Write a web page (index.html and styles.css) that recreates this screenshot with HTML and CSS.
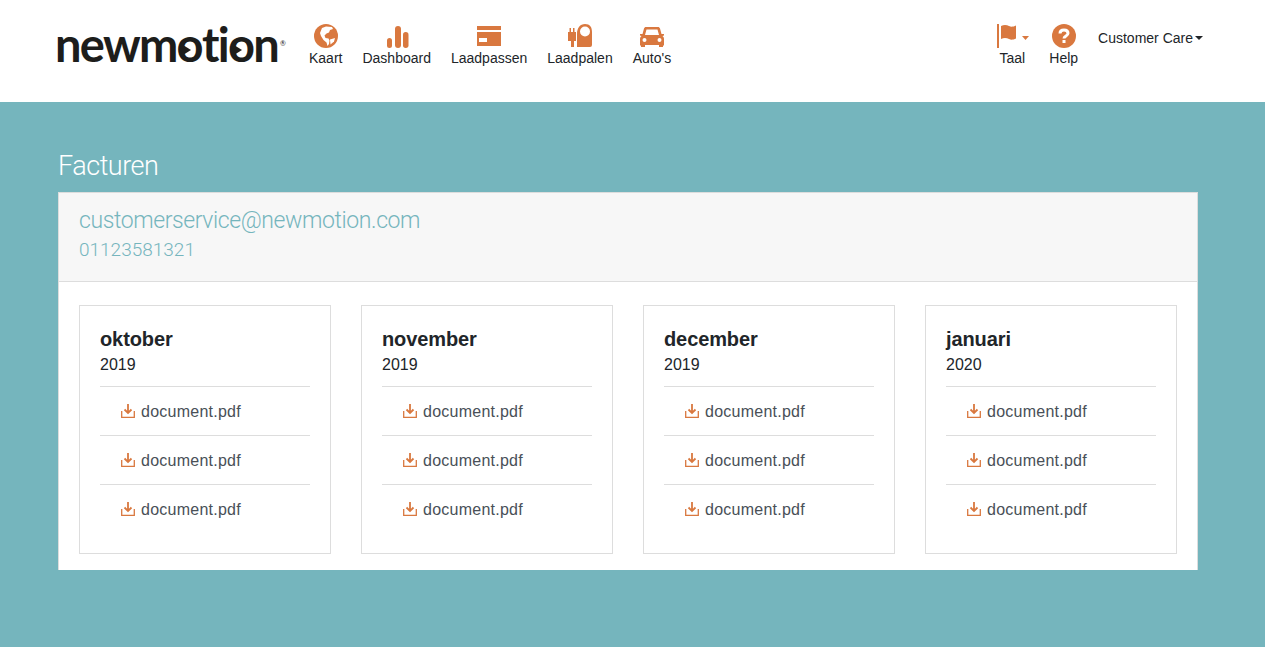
FILE: index.html
```html
<!DOCTYPE html>
<html>
<head>
  <meta charset="UTF-8" />
  <title>Facturen</title>
  <link rel="stylesheet" href="styles.css">
</head>
<body>
  <header class="topbar">
    <a class="logo">newm<span class="logo-o">o</span>ti<span class="logo-o">o</span>n<sup class="logo-reg">®</sup></a>
    <nav class="nav">
      <a class="nav-item">
        <svg class="nav-icon" viewBox="0 0 24 24"><circle cx="12" cy="12" r="12" fill="#d9783f"/><path fill="#fff" d="M8 4l4-1.500 6 .5 1 2-3 1-1 2.500-2.500 1-2 2 1 2.500 3 .5 1 2-.5 3.500-1.500 2-1-3.500-3-2.500-2.500-4-1-3z"/><path fill="#fff" d="M16 15.500l5-1.500-1 3.500-3.500 3z"/></svg>
        <span>Kaart</span>
      </a>
      <a class="nav-item">
        <svg class="nav-icon" viewBox="0 0 24 24"><rect x="2" y="14" width="5" height="10" rx="2.500" fill="#d9783f"/><rect x="10" y="2" width="6" height="22" rx="3" fill="#d9783f"/><rect x="18" y="8" width="5.500" height="16" rx="2.700" fill="#d9783f"/></svg>
        <span>Dashboard</span>
      </a>
      <a class="nav-item">
        <svg class="nav-icon" viewBox="0 0 24 24"><path fill="#d9783f" d="M0 2h24v4H0zM0 8h24v14H0z"/><rect x="2" y="14" width="8" height="4" fill="#fff"/></svg>
        <span>Laadpassen</span>
      </a>
      <a class="nav-item">
        <svg class="nav-icon" viewBox="0 0 24 24"><path fill="#d9783f" fill-rule="evenodd" d="M9 23V10C9 4 12 0 17 0s7 3 7 8v13a2 2 0 0 1-2 2zM17 2.500a5 5 0 1 0 0 10 5 5 0 0 0 0-10z"/><path fill="#d9783f" d="M1.500 4H3v4h2V4h1.500v4H8v9H6v6H3v-6H0V8h1.500z"/></svg>
        <span>Laadpalen</span>
      </a>
      <a class="nav-item">
        <svg class="nav-icon" viewBox="0 0 24 24"><path fill="#d9783f" fill-rule="evenodd" d="M6 3h12c1 0 1.700.6 2 1.500L21.500 10H24v1.500l-1.500.5c1 .8 1.500 1.800 1.500 3v6l-1 1v1h-4v-2H5v2H1v-1l-1-1v-6c0-1.200.5-2.200 1.500-3L0 11.500V10h2.500L4 4.500C4.300 3.600 5 3 6 3zm.5 2.500L5 11h14l-1.500-5.500zM4.500 14a2 2 0 1 0 0 4 2 2 0 0 0 0-4zm15 0a2 2 0 1 0 0 4 2 2 0 0 0 0-4z"/></svg>
        <span>Auto's</span>
      </a>
    </nav>
    <nav class="nav nav-right">
      <a class="nav-item nav-taal">
        <svg class="nav-icon flag-icon" viewBox="0 0 32 24"><rect x="0" y="0" width="2" height="24" fill="#d9783f"/><path fill="#d9783f" d="M4 2c3-1.500 6-1 8 0s4 1 7-.5v13c-3 1.500-5 1.500-7 .5s-5-1.500-8 0z"/><path fill="#d9783f" d="M25 12h7l-3.500 4z"/></svg>
        <span>Taal</span>
      </a>
      <a class="nav-item">
        <svg class="nav-icon" viewBox="0 0 24 24"><circle cx="12" cy="12" r="12" fill="#d9783f"/><path fill="none" stroke="#fff" stroke-width="3" d="M8 9.500C8 7 10 6 12 6s4 1 4 3.200c0 2.800-4 2.600-4 5.300"/><rect x="10.500" y="16" width="3" height="3" fill="#fff"/></svg>
        <span>Help</span>
      </a>
      <a class="nav-user">Customer Care<span class="caret"></span></a>
    </nav>
  </header>

  <main class="content">
    <h1 class="page-title">Facturen</h1>
    <section class="panel">
      <div class="panel-heading">
        <div class="panel-email">customerservice@newmotion.com</div>
        <div class="panel-phone">01123581321</div>
      </div>
      <div class="panel-body">
        <div class="card">
          <h2 class="card-month">oktober</h2>
          <div class="card-year">2019</div>
          <a class="doc"><svg class="doc-icon" viewBox="0 0 14 14"><path d="M.7 7v6.300h12.600V7"/><path class="doc-arrow" d="M7 0v9M3.500 5.500L7 9l3.500-3.500"/></svg>document.pdf</a>
          <a class="doc"><svg class="doc-icon" viewBox="0 0 14 14"><path d="M.7 7v6.300h12.600V7"/><path class="doc-arrow" d="M7 0v9M3.500 5.500L7 9l3.500-3.500"/></svg>document.pdf</a>
          <a class="doc"><svg class="doc-icon" viewBox="0 0 14 14"><path d="M.7 7v6.300h12.600V7"/><path class="doc-arrow" d="M7 0v9M3.500 5.500L7 9l3.500-3.500"/></svg>document.pdf</a>
        </div>
        <div class="card">
          <h2 class="card-month">november</h2>
          <div class="card-year">2019</div>
          <a class="doc"><svg class="doc-icon" viewBox="0 0 14 14"><path d="M.7 7v6.300h12.600V7"/><path class="doc-arrow" d="M7 0v9M3.500 5.500L7 9l3.500-3.500"/></svg>document.pdf</a>
          <a class="doc"><svg class="doc-icon" viewBox="0 0 14 14"><path d="M.7 7v6.300h12.600V7"/><path class="doc-arrow" d="M7 0v9M3.500 5.500L7 9l3.500-3.500"/></svg>document.pdf</a>
          <a class="doc"><svg class="doc-icon" viewBox="0 0 14 14"><path d="M.7 7v6.300h12.600V7"/><path class="doc-arrow" d="M7 0v9M3.500 5.500L7 9l3.500-3.500"/></svg>document.pdf</a>
        </div>
        <div class="card">
          <h2 class="card-month">december</h2>
          <div class="card-year">2019</div>
          <a class="doc"><svg class="doc-icon" viewBox="0 0 14 14"><path d="M.7 7v6.300h12.600V7"/><path class="doc-arrow" d="M7 0v9M3.500 5.500L7 9l3.500-3.500"/></svg>document.pdf</a>
          <a class="doc"><svg class="doc-icon" viewBox="0 0 14 14"><path d="M.7 7v6.300h12.600V7"/><path class="doc-arrow" d="M7 0v9M3.500 5.500L7 9l3.500-3.500"/></svg>document.pdf</a>
          <a class="doc"><svg class="doc-icon" viewBox="0 0 14 14"><path d="M.7 7v6.300h12.600V7"/><path class="doc-arrow" d="M7 0v9M3.500 5.500L7 9l3.500-3.500"/></svg>document.pdf</a>
        </div>
        <div class="card">
          <h2 class="card-month">januari</h2>
          <div class="card-year">2020</div>
          <a class="doc"><svg class="doc-icon" viewBox="0 0 14 14"><path d="M.7 7v6.300h12.600V7"/><path class="doc-arrow" d="M7 0v9M3.500 5.500L7 9l3.500-3.500"/></svg>document.pdf</a>
          <a class="doc"><svg class="doc-icon" viewBox="0 0 14 14"><path d="M.7 7v6.300h12.600V7"/><path class="doc-arrow" d="M7 0v9M3.500 5.500L7 9l3.500-3.500"/></svg>document.pdf</a>
          <a class="doc"><svg class="doc-icon" viewBox="0 0 14 14"><path d="M.7 7v6.300h12.600V7"/><path class="doc-arrow" d="M7 0v9M3.500 5.500L7 9l3.500-3.500"/></svg>document.pdf</a>
        </div>
      </div>
    </section>
  </main>
</body>
</html>
```
FILE: styles.css
```css
* {
  box-sizing: border-box;
}
html, body {
  height: 100%;
}
body {
  margin: 0;
  background: #75b5bd;
  font-family: "Liberation Sans", Arial, sans-serif;
  color: #212529;
  overflow: hidden;
}
.topbar {
  display: flex;
  height: 102px;
  padding: 24px 62px 0 55px;
  background: #fff;
}
.logo {
  width: 244px;
  height: 50px;
  flex: none;
  font-family: Lato, sans-serif;
  font-weight: 700;
  font-size: 47px;
  line-height: 40px;
  letter-spacing: -1.7px;
  white-space: nowrap;
  color: #1d1d1b;
}
.logo-o {
  position: relative;
  display: inline-block;
}
.logo-o::after {
  content: "";
  position: absolute;
  left: 6px;
  top: 21px;
  border-left: 8px solid #1d1d1b;
  border-top: 5px solid transparent;
  border-bottom: 5px solid transparent;
}
.logo-reg {
  font-size: 7px;
  line-height: 7px;
  font-weight: 400;
  letter-spacing: 0;
  margin-left: 2px;
  vertical-align: 16px;
}
.nav {
  display: flex;
  align-items: flex-start;
}
.nav-right {
  margin-left: auto;
}
.nav-item {
  display: flex;
  flex-direction: column;
  align-items: center;
  padding: 0 10px;
  font-size: 14px;
  line-height: 20px;
}
.nav-icon {
  display: block;
  width: 24px;
  height: 24px;
}
.flag-icon {
  width: 32px;
  margin-left: 2px;
}
.nav-user {
  margin: 4px 0 0 10px;
  font-size: 14px;
  line-height: 20px;
}
.caret {
  display: inline-block;
  margin-left: 2px;
  vertical-align: 3px;
  border-top: 4px solid #212529;
  border-left: 4px solid transparent;
  border-right: 4px solid transparent;
}
.content {
  width: 1140px;
  margin-left: 58px;
  padding-top: 49px;
}
.page-title {
  height: 32px;
  margin: -1px 0 10px;
  font-family: Roboto, sans-serif;
  font-weight: 300;
  font-size: 27px;
  line-height: 32px;
  letter-spacing: -0.5px;
  color: #fff;
}
.panel {
  background: #fff;
  border: 1px solid #ddd;
  border-bottom: 0;
}
.panel-heading {
  height: 89px;
  padding: 15px 20px 0;
  background: #f7f7f7;
  border-bottom: 1px solid #ddd;
  font-family: Roboto, sans-serif;
  font-weight: 300;
  color: #75b5bd;
}
.panel-email {
  font-size: 23px;
  line-height: 26px;
  letter-spacing: -0.4px;
}
.panel-phone {
  margin-top: 4px;
  font-size: 19px;
  line-height: 24px;
}
.panel-body {
  display: grid;
  grid-template-columns: repeat(4, 252px);
  gap: 30px;
  padding: 23px 20px 16px;
}
.card {
  padding: 20px;
  border: 1px solid #ddd;
}
.card-month {
  margin: 0;
  font-size: 20px;
  line-height: 26px;
  font-weight: 700;
  letter-spacing: -0.1px;
}
.card-year {
  height: 34px;
  padding-top: 1px;
  font-size: 16px;
  line-height: 24px;
}
.doc {
  display: flex;
  align-items: center;
  height: 49px;
  padding: 2px 0 0 21px;
  border-top: 1px solid #ddd;
  font-size: 16px;
  letter-spacing: 0.25px;
  color: #495057;
}
.doc-icon {
  width: 14px;
  height: 14px;
  margin: -2px 6px 0 0;
  fill: none;
  stroke: #d9783f;
  stroke-width: 1.300;
}
.doc-arrow {
  stroke-width: 1.800;
}
```
